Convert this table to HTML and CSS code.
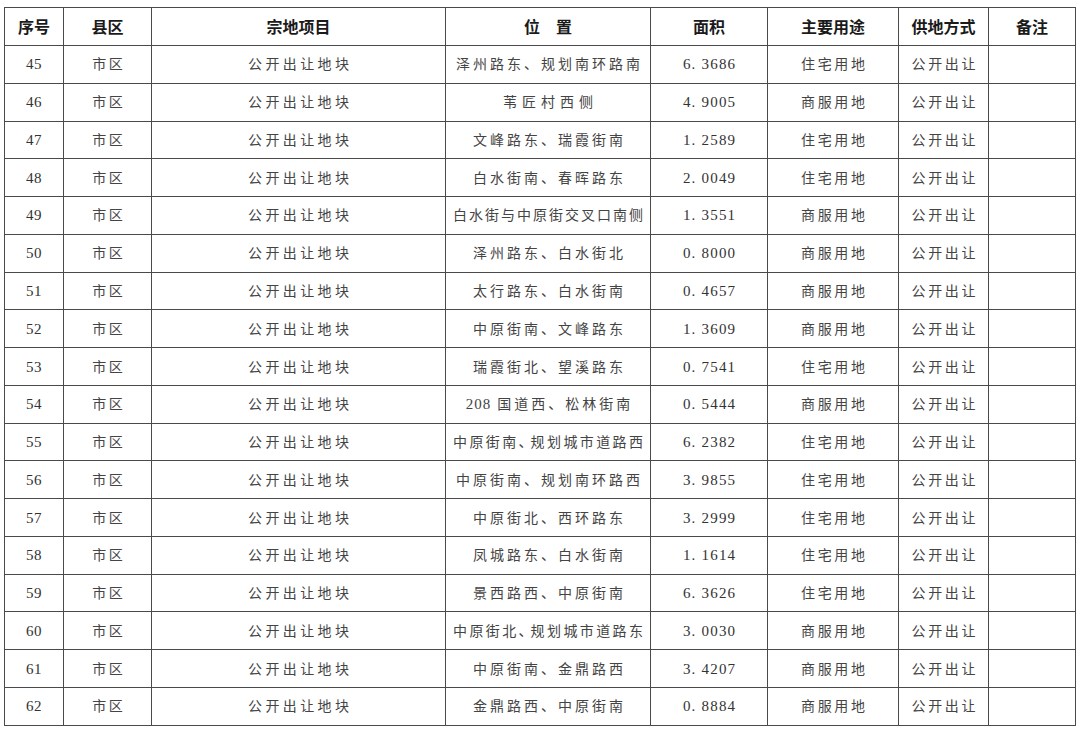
FILE: index.html
```html
<!DOCTYPE html>
<html lang="zh-CN">
<head>
<meta charset="utf-8">
<title>地块表</title>
<link rel="stylesheet" href="styles.css">
</head>
<body>
<table class="land">
  <colgroup>
    <col class="c-no"><col class="c-county"><col class="c-item"><col class="c-loc"><col class="c-area"><col class="c-use"><col class="c-way"><col class="c-note">
  </colgroup>
  <thead>
    <tr><th>序号</th><th>县区</th><th>宗地项目</th><th>位　置</th><th>面积</th><th>主要用途</th><th>供地方式</th><th>备注</th></tr>
  </thead>
  <tbody>
    <tr><td class="num">45</td><td class="cn">市区</td><td class="cn item">公开出让地块</td><td class="cn loc">泽州路东、规划南环路南</td><td class="num area">6. 3686</td><td class="cn">住宅用地</td><td class="cn">公开出让</td><td></td></tr>
    <tr><td class="num">46</td><td class="cn">市区</td><td class="cn item">公开出让地块</td><td class="cn loc wide">苇匠村西侧</td><td class="num area">4. 9005</td><td class="cn">商服用地</td><td class="cn">公开出让</td><td></td></tr>
    <tr><td class="num">47</td><td class="cn">市区</td><td class="cn item">公开出让地块</td><td class="cn loc">文峰路东、瑞霞街南</td><td class="num area">1. 2589</td><td class="cn">住宅用地</td><td class="cn">公开出让</td><td></td></tr>
    <tr><td class="num">48</td><td class="cn">市区</td><td class="cn item">公开出让地块</td><td class="cn loc">白水街南、春晖路东</td><td class="num area">2. 0049</td><td class="cn">住宅用地</td><td class="cn">公开出让</td><td></td></tr>
    <tr><td class="num">49</td><td class="cn">市区</td><td class="cn item">公开出让地块</td><td class="cn loc tight">白水街与中原街交叉口南侧</td><td class="num area">1. 3551</td><td class="cn">商服用地</td><td class="cn">公开出让</td><td></td></tr>
    <tr><td class="num">50</td><td class="cn">市区</td><td class="cn item">公开出让地块</td><td class="cn loc">泽州路东、白水街北</td><td class="num area">0. 8000</td><td class="cn">商服用地</td><td class="cn">公开出让</td><td></td></tr>
    <tr><td class="num">51</td><td class="cn">市区</td><td class="cn item">公开出让地块</td><td class="cn loc">太行路东、白水街南</td><td class="num area">0. 4657</td><td class="cn">商服用地</td><td class="cn">公开出让</td><td></td></tr>
    <tr><td class="num">52</td><td class="cn">市区</td><td class="cn item">公开出让地块</td><td class="cn loc">中原街南、文峰路东</td><td class="num area">1. 3609</td><td class="cn">商服用地</td><td class="cn">公开出让</td><td></td></tr>
    <tr><td class="num">53</td><td class="cn">市区</td><td class="cn item">公开出让地块</td><td class="cn loc">瑞霞街北、望溪路东</td><td class="num area">0. 7541</td><td class="cn">住宅用地</td><td class="cn">公开出让</td><td></td></tr>
    <tr><td class="num">54</td><td class="cn">市区</td><td class="cn item">公开出让地块</td><td class="cn loc"><span class="digits">208</span> 国道西、松林街南</td><td class="num area">0. 5444</td><td class="cn">商服用地</td><td class="cn">公开出让</td><td></td></tr>
    <tr><td class="num">55</td><td class="cn">市区</td><td class="cn item">公开出让地块</td><td class="cn loc city">中原街南<span class="comma">、</span>规划城市道路西</td><td class="num area">6. 2382</td><td class="cn">住宅用地</td><td class="cn">公开出让</td><td></td></tr>
    <tr><td class="num">56</td><td class="cn">市区</td><td class="cn item">公开出让地块</td><td class="cn loc">中原街南、规划南环路西</td><td class="num area">3. 9855</td><td class="cn">住宅用地</td><td class="cn">公开出让</td><td></td></tr>
    <tr><td class="num">57</td><td class="cn">市区</td><td class="cn item">公开出让地块</td><td class="cn loc">中原街北、西环路东</td><td class="num area">3. 2999</td><td class="cn">住宅用地</td><td class="cn">公开出让</td><td></td></tr>
    <tr><td class="num">58</td><td class="cn">市区</td><td class="cn item">公开出让地块</td><td class="cn loc">凤城路东、白水街南</td><td class="num area">1. 1614</td><td class="cn">住宅用地</td><td class="cn">公开出让</td><td></td></tr>
    <tr><td class="num">59</td><td class="cn">市区</td><td class="cn item">公开出让地块</td><td class="cn loc">景西路西、中原街南</td><td class="num area">6. 3626</td><td class="cn">住宅用地</td><td class="cn">公开出让</td><td></td></tr>
    <tr><td class="num">60</td><td class="cn">市区</td><td class="cn item">公开出让地块</td><td class="cn loc city">中原街北<span class="comma">、</span>规划城市道路东</td><td class="num area">3. 0030</td><td class="cn">商服用地</td><td class="cn">公开出让</td><td></td></tr>
    <tr><td class="num">61</td><td class="cn">市区</td><td class="cn item">公开出让地块</td><td class="cn loc">中原街南、金鼎路西</td><td class="num area">3. 4207</td><td class="cn">商服用地</td><td class="cn">公开出让</td><td></td></tr>
    <tr><td class="num">62</td><td class="cn">市区</td><td class="cn item">公开出让地块</td><td class="cn loc">金鼎路西、中原街南</td><td class="num area">0. 8884</td><td class="cn">商服用地</td><td class="cn">公开出让</td><td></td></tr>
  </tbody>
</table>
</body>
</html>
```

FILE: styles.css
```css
html, body {
  background: #ffffff;
}
body {
  margin: 0;
  padding: 7px 0 0 4px;
}
.land {
  border-collapse: collapse;
  table-layout: fixed;
  width: 1071px;
  color: #333333;
}
.c-no { width: 59px; }
.c-county { width: 88px; }
.c-item { width: 294px; }
.c-loc { width: 205px; }
.c-area { width: 117px; }
.c-use { width: 131px; }
.c-way { width: 90px; }
.c-note { width: 87px; }

.land thead tr {
  height: 38px;
}
.land tbody tr {
  height: 37.78px;
}
.land th,
.land td {
  border: 1px solid #4a4a4a;
  padding: 0;
  text-align: center;
  vertical-align: middle;
  white-space: nowrap;
  overflow: hidden;
  line-height: 18px;
}
.land th {
  padding-bottom: 1px;
  font-family: "Noto Sans CJK SC", "Noto Sans", sans-serif;
  font-size: 16px;
  font-weight: 700;
  color: #1a1a1a;
}
.land td {
  font-family: "Noto Sans CJK SC", sans-serif;
  font-size: 14px;
  font-weight: 400;
  color: #444444;
}
.land td.cn {
  letter-spacing: 2.6px;
  padding-left: 2.6px;
  padding-bottom: 2px;
}
.land td.item {
  letter-spacing: 3.4px;
  padding-left: 3.4px;
}
.land td.loc {
  letter-spacing: 3px;
  padding-left: 3px;
}
.land td.loc.wide {
  letter-spacing: 5px;
  padding-left: 5px;
}
.land td.loc.tight {
  letter-spacing: 2px;
  padding-left: 2px;
}
.land td.loc.city {
  letter-spacing: 2.4px;
  padding-left: 2.4px;
}
.comma {
  letter-spacing: -6px;
  margin-right: 4px;
}
.digits {
  font-family: "Liberation Serif", serif;
  font-size: 15px;
  letter-spacing: 1px;
}
.land td.num {
  font-family: "Liberation Serif", "Times New Roman", serif;
  font-size: 15px;
  letter-spacing: 0.5px;
  color: #333333;
}
.land td.area {
  letter-spacing: 1.2px;
  padding-left: 1.2px;
}
```
